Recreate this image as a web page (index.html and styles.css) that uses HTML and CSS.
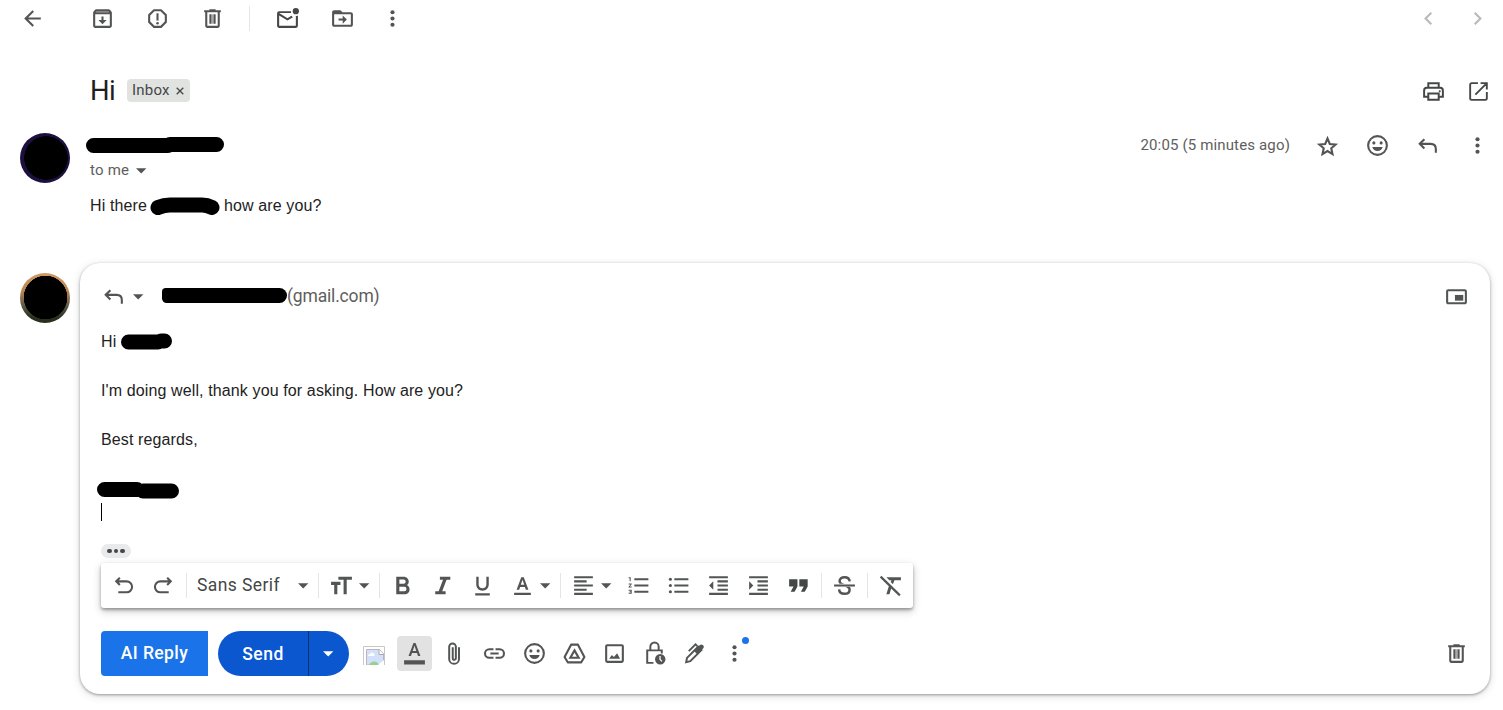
FILE: index.html
```html
<!DOCTYPE html>
<html lang="en">
<head>
<meta charset="utf-8">
<title>Hi</title>
<link rel="stylesheet" href="styles.css">
</head>
<body>
<svg class="defs" aria-hidden="true">
  <symbol id="back" viewBox="0 0 24 24"><path d="M20 11H7.830l5.590-5.590L12 4l-8 8 8 8 1.410-1.410L7.830 13H20v-2z"/></symbol>
  <symbol id="archive" viewBox="0 0 24 24"><path d="M20.540 5.230l-1.390-1.680C18.880 3.210 18.470 3 18 3H6c-.470 0-.880.210-1.160.550L3.460 5.230C3.170 5.570 3 6.020 3 6.500V19c0 1.100.900 2 2 2h14c1.100 0 2-.900 2-2V6.500c0-.480-.170-.930-.460-1.270zM19 19H5V8h14v11z"/><path d="M5.500 6.200h13l-.800-1.200H6.300z" fill="#999"/><path d="M11 10h2v3.500h3L12 17.500l-4-4h3z"/></symbol>
  <symbol id="spam" viewBox="0 0 24 24"><path d="M15.730 3H8.270L3 8.270v7.460L8.270 21h7.460L21 15.730V8.270L15.730 3zM19 14.900L14.900 19H9.100L5 14.900V9.100L9.100 5h5.800L19 9.100v5.800z"/><path d="M11 7h2v7h-2z"/><circle cx="12" cy="16.500" r="1.200"/></symbol>
  <symbol id="trash" viewBox="0 0 24 24"><path d="M15 4V3H9v1H4v2h1v13c0 1.100.900 2 2 2h10c1.100 0 2-.900 2-2V6h1V4h-5zm2 15H7V6h10v13zM9 8h2v9H9zm4 0h2v9h-2z"/><path d="M11 8h2v9h-2z" opacity=".5"/></symbol>
  <symbol id="unread" viewBox="0 0 24 24"><path d="M15.500 5H4a2 2 0 0 0-2 2v12c0 1.100.900 2 2 2h16a2 2 0 0 0 2-2V9.200c-.600.300-1.300.500-2 .500V19H4V9l8 5 5.200-3.300-1.500-1.400L12 11.700 4 6.800h11.300z"/><circle cx="20" cy="5" r="3"/></symbol>
  <symbol id="move" viewBox="0 0 24 24"><path d="M20 6h-8l-2-2H4c-1.100 0-2 .900-2 2v12c0 1.100.900 2 2 2h16c1.100 0 2-.900 2-2V8c0-1.100-.900-2-2-2zm0 12H4V8h16v10z"/><path d="M12.200 9l4 4-4 4v-3H8.200v-2h4z"/></symbol>
  <symbol id="more" viewBox="0 0 24 24"><circle cx="12" cy="6" r="2"/><circle cx="12" cy="12" r="2"/><circle cx="12" cy="18" r="2"/></symbol>
  <symbol id="prev" viewBox="0 0 24 24"><path d="M14.700 6.500L9.200 12l5.500 5.500" fill="none" stroke="currentColor" stroke-width="2"/></symbol>
  <symbol id="next" viewBox="0 0 24 24"><path d="M9.300 6.500l5.500 5.500-5.500 5.500" fill="none" stroke="currentColor" stroke-width="2"/></symbol>
  <symbol id="print" viewBox="0 0 24 24"><path d="M7 8V4h10v4M7 17H3v-6c0-1.700 1-2.500 2.500-2.500h13c1.500 0 2.500.800 2.500 2.500v6h-4M7 14h10v6H7z" fill="none" stroke="currentColor" stroke-width="1.900"/><circle cx="18" cy="11.700" r="1"/></symbol>
  <symbol id="open" viewBox="0 0 24 24"><path d="M11.500 4H5.500C4.500 4 4 4.500 4 5.500v13c0 1 .500 1.500 1.500 1.500h13c1 0 1.500-.500 1.500-1.500v-6M14 4h6v6M20 4L9 15" fill="none" stroke="currentColor" stroke-width="1.800"/></symbol>
  <symbol id="star" viewBox="0 0 24 24"><path d="M12 4.500l2.200 5.200 5.600.500-4.200 3.700 1.200 5.500-4.800-2.900-4.800 2.900 1.200-5.500-4.200-3.700 5.600-.500z" fill="none" stroke="currentColor" stroke-width="2" transform="translate(0 .8)"/></symbol>
  <symbol id="smile" viewBox="0 0 24 24"><circle cx="12" cy="12" r="9" fill="none" stroke="currentColor" stroke-width="2"/><circle cx="8.500" cy="9.500" r="1.500"/><circle cx="15.500" cy="9.500" r="1.500"/><path d="M7 13.500h10c-.700 2.300-2.600 3.800-5 3.800s-4.300-1.500-5-3.800z"/></symbol>
  <symbol id="reply" viewBox="0 0 24 24"><path d="M9 5.500L4.500 10 9 14.500M4.500 10H15c3 0 5 2 5 5v3.500" fill="none" stroke="currentColor" stroke-width="2" transform="translate(0 .4)"/></symbol>
  <symbol id="popout" viewBox="0 0 24 24"><path d="M20 5H4c-1.100 0-2 .900-2 2v10.500c0 1.100.900 2 2 2h16c1.100 0 2-.900 2-2V7c0-1.100-.900-2-2-2zm0 12.600H4V7h16z"/><path d="M10.500 10.500h8v5.500h-8z"/></symbol>
  <symbol id="undo" viewBox="0 0 24 24"><path d="M8.500 4.500L5 8l3.500 3.500M5 8h10a4.500 4.500 0 0 1 0 10.500H7" fill="none" stroke="currentColor" stroke-width="2"/></symbol>
  <symbol id="redo" viewBox="0 0 24 24"><path d="M15.500 4.500L19 8l-3.500 3.500M19 8H9a4.500 4.500 0 0 0 0 10.500h8" fill="none" stroke="currentColor" stroke-width="2"/></symbol>
  <symbol id="size" viewBox="0 0 24 24"><path d="M9 3.500v3h5v14h3v-14h5v-3zM2 11.500h3v9h3v-9h3v-3H2z"/></symbol>
  <symbol id="bold" viewBox="0 0 24 24"><path d="M16.200 11.600c1.100-.800 1.800-2 1.800-3.300C18 5.600 15.900 3.500 13.200 3.500H6v17h8c2.700 0 4.800-2 4.800-4.700 0-1.900-1-3.500-2.600-4.200zM9 6.300h4a2 2 0 0 1 0 4.100H9zm4.600 11.300H9v-4.500h4.600a2.200 2.200 0 0 1 0 4.500z"/></symbol>
  <symbol id="italic" viewBox="0 0 24 24"><path d="M9.500 3.500v3h3l-4.200 11H5v3h10v-3h-3.300l4.200-11H19.500v-3z"/></symbol>
  <symbol id="underline" viewBox="0 0 24 24"><path d="M12 17c3.310 0 6-2.690 6-6V3.500h-2.300V11c0 2-1.500 3.700-3.700 3.700S8.300 13 8.300 11V3.500H6V11c0 3.310 2.690 6 6 6zM5 19.500h14v2.200H5z"/></symbol>
  <symbol id="color" viewBox="0 0 24 24"><path d="M4 19h16v2.200H4zM10.800 4L6.300 16h2.500l.900-2.600h4.600l.900 2.600h2.500L13.200 4zm-.450 7.300L12 6.400l1.650 4.900z"/></symbol>
  <symbol id="align" viewBox="0 0 24 24"><path d="M3 3h18v2H3zM3 7h12v2H3zM3 11h18v2H3zM3 15h12v2H3zM3 19h18v2H3z"/></symbol>
  <symbol id="ol" viewBox="0 0 24 24"><path d="M2.500 17h2v.500h-1v1h1v.500h-2v1h3v-4h-3zm1-9h1V4h-2v1h1zm-1 3h1.800l-1.800 2.100v.900h3v-1H3.700l1.800-2.100V10h-3zM8 5h13.500v2H8zm0 12h13.500v2H8zm0-6h13.500v2H8z"/></symbol>
  <symbol id="ul" viewBox="0 0 24 24"><circle cx="4.200" cy="6" r="1.500"/><circle cx="4.200" cy="12" r="1.500"/><circle cx="4.200" cy="18" r="1.500"/><path d="M8 5h13.500v2H8zm0 12h13.500v2H8zm0-6h13.500v2H8z"/></symbol>
  <symbol id="outdent" viewBox="0 0 24 24"><path d="M11 17h10v-2H11zm-8-5l4 4V8zm0 9h18v-2H3zM3 3v2h18V3zm8 6h10V7H11zm0 4h10v-2H11z"/></symbol>
  <symbol id="indent" viewBox="0 0 24 24"><path d="M3 21h18v-2H3zM3 8v8l4-4zm8 9h10v-2H11zM3 3v2h18V3zm8 6h10V7H11zm0 4h10v-2H11z"/></symbol>
  <symbol id="quote" viewBox="0 0 24 24"><path d="M4.500 18h3.700l2.800-5V6H3v7h4.200zm9.800 0H18l2.800-5V6h-8v7H17z"/></symbol>
  <symbol id="strike" viewBox="0 0 24 24"><path d="M17 8c-.300-2.600-2.200-4-5-4-2.700 0-4.700 1.400-4.700 3.600 0 2.300 2 3.300 4.900 4.100 3 .900 4.700 1.900 4.700 4.300 0 2.500-2.100 4-4.900 4-3 0-5-1.500-5.200-4.300" fill="none" stroke="currentColor" stroke-width="2.400"/><path d="M1 10.300h22v3H1z" fill="#fff"/><path d="M2 11h20v2H2z"/></symbol>
  <symbol id="clear" viewBox="0 0 24 24"><path d="M8 4h14v3h-6.200l-1.500 3.700-2.100-2.100.700-1.600h-2zM12.900 14L11 20.500H8l2.700-8.700z"/><path d="M2.500 3.500l18.500 18" stroke="currentColor" stroke-width="2.100"/></symbol>
  <symbol id="format" viewBox="0 0 24 24"><path d="M2 18.500h20v4H2zM11 2L6.300 14.500h2.300l1-2.900h4.800l1 2.900h2.300L13 2zm-.700 7.600L12 4.600l1.700 5z"/></symbol>
  <symbol id="clip" viewBox="0 0 24 24"><path d="M16.300 6v11.200a4.700 4.700 0 0 1-9.400 0V5.500a3.200 3.200 0 0 1 6.400 0v11a1.500 1.500 0 0 1-3 0V6" fill="none" stroke="currentColor" stroke-width="1.900"/></symbol>
  <symbol id="link" viewBox="0 0 24 24"><path d="M11 7.900H7a4.100 4.100 0 0 0 0 8.200h4M13 7.900h4a4.100 4.100 0 0 1 0 8.200h-4M8 12h8" fill="none" stroke="currentColor" stroke-width="2"/></symbol>
  <symbol id="drive" viewBox="0 0 24 24"><path d="M8.700 3.500h6.600l6.200 11.800-3 5.200h-13l-3-5.200z" fill="none" stroke="currentColor" stroke-width="2" stroke-linejoin="round"/><path d="M12 9l4 7H8z" fill="none" stroke="currentColor" stroke-width="2"/></symbol>
  <symbol id="image" viewBox="0 0 24 24"><rect x="4" y="4" width="16" height="16" rx="1" fill="none" stroke="currentColor" stroke-width="2"/><path d="M6.800 17l2.700-3.600 2 2 3-3.600 2.800 5.200z"/></symbol>
  <symbol id="lock" viewBox="0 0 24 24"><path d="M11 21H5V9h14v3M8 9V5.500a4 4 0 0 1 8 0V9" fill="none" stroke="currentColor" stroke-width="1.900"/><circle cx="17.500" cy="17.500" r="5"/><path d="M17.300 14.500v3.200l1.900 1.900" fill="none" stroke="#fff" stroke-width="1.200"/></symbol>
  <symbol id="pen" viewBox="0 0 24 24"><path d="M4 20.300l.8-4.100L15.500 5.500l3.200 3.200L8 19.400z" fill="none" stroke="currentColor" stroke-width="1.900"/><path d="M11.500 9.500L17 4c1-1 2.200-1 3.200 0s1 2.200 0 3.200L14.700 12.700z"/><path d="M6.500 9.700L13 3.300l1.700 1.700" fill="none" stroke="currentColor" stroke-width="1.800"/></symbol>
  <symbol id="caret" viewBox="0 0 20 25"><path d="M5 10.300h10.400l-5.200 5.200z"/></symbol>
</svg>

<nav class="toolbar">
  <svg class="icon first"><use href="#back"/></svg>
  <svg class="icon"><use href="#archive"/></svg>
  <svg class="icon"><use href="#spam"/></svg>
  <svg class="icon"><use href="#trash"/></svg>
  <span class="rule"></span>
  <svg class="icon dark"><use href="#unread"/></svg>
  <svg class="icon"><use href="#move"/></svg>
  <svg class="icon kebab"><use href="#more"/></svg>
  <div class="pager"><svg class="icon"><use href="#prev"/></svg><svg class="icon"><use href="#next"/></svg></div>
</nav>

<header class="subject">
  <h1>Hi</h1>
  <span class="label"><span>Inbox</span><svg class="close" viewBox="0 0 8 8"><path d="M.7.700l6.600 6.600M7.300.700L.7 7.300"/></svg></span>
  <div class="subject-actions"><svg class="icon dark"><use href="#print"/></svg><svg class="icon dark"><use href="#open"/></svg></div>
</header>

<article class="message">
  <div class="avatar violet"></div>
  <div class="content">
    <div class="sender-row">
      <svg class="sender" viewBox="0 0 140 18"><path d="M8.500 9.500H83M85 8.500h46.500" class="marker"/></svg>
      <div class="meta">
        <time>20:05 (5 minutes ago)</time>
        <svg class="icon"><use href="#star"/></svg>
        <svg class="icon"><use href="#smile"/></svg>
        <svg class="icon"><use href="#reply"/></svg>
        <svg class="icon"><use href="#more"/></svg>
      </div>
    </div>
    <div class="recipient"><span>to me</span><svg class="caret"><use href="#caret"/></svg></div>
    <p class="body-text"><span>Hi there</span><svg class="name" viewBox="0 0 70 18"><path d="M8 10.500Q14 8 20 8H52Q57 8 62 10.500" class="marker"/></svg><span>how are you?</span></p>
  </div>
</article>

<section class="reply">
  <div class="avatar amber"></div>
  <div class="card">
    <div class="to-row">
      <svg class="icon"><use href="#reply"/></svg>
      <svg class="caret"><use href="#caret"/></svg>
      <span class="address-mask"></span>
      <span class="address">(gmail.com)</span>
      <svg class="icon popout"><use href="#popout"/></svg>
    </div>
    <div class="editor">
      <p><span>Hi</span><svg class="short" viewBox="0 0 52 18"><path d="M7.500 9H37M40 8h3.500" class="marker"/></svg></p>
      <p></p>
      <p>I'm doing well, thank you for asking. How are you?</p>
      <p></p>
      <p>Best regards,</p>
      <p></p>
      <p><svg class="signature" viewBox="0 0 82 18"><path d="M7.500 7.500H40M46 9h28.500" class="marker"/></svg></p>
      <p><span class="cursor"></span></p>
    </div>
    <div class="trimmed"><i></i><i></i><i></i></div>
    <div class="format-bar">
      <span class="cell"><svg class="icon"><use href="#undo"/></svg></span>
      <span class="cell"><svg class="icon"><use href="#redo"/></svg></span>
      <span class="sep"></span>
      <span class="font"><span>Sans Serif</span><svg class="caret"><use href="#caret"/></svg></span>
      <span class="sep"></span>
      <span class="cell wide"><svg class="icon"><use href="#size"/></svg><svg class="caret"><use href="#caret"/></svg></span>
      <span class="sep"></span>
      <span class="cell"><svg class="icon"><use href="#bold"/></svg></span>
      <span class="cell"><svg class="icon"><use href="#italic"/></svg></span>
      <span class="cell"><svg class="icon"><use href="#underline"/></svg></span>
      <span class="cell wide"><svg class="icon"><use href="#color"/></svg><svg class="caret"><use href="#caret"/></svg></span>
      <span class="sep"></span>
      <span class="cell wide"><svg class="icon"><use href="#align"/></svg><svg class="caret"><use href="#caret"/></svg></span>
      <span class="cell"><svg class="icon"><use href="#ol"/></svg></span>
      <span class="cell"><svg class="icon"><use href="#ul"/></svg></span>
      <span class="cell"><svg class="icon"><use href="#outdent"/></svg></span>
      <span class="cell"><svg class="icon"><use href="#indent"/></svg></span>
      <span class="cell"><svg class="icon dark"><use href="#quote"/></svg></span>
      <span class="sep"></span>
      <span class="cell"><svg class="icon"><use href="#strike"/></svg></span>
      <span class="sep"></span>
      <span class="cell"><svg class="icon"><use href="#clear"/></svg></span>
    </div>
    <div class="send-row">
      <button class="ai">AI Reply</button>
      <div class="send"><span class="send-text">Send</span><span class="send-more"><svg class="caret"><use href="#caret"/></svg></span></div>
      <svg class="missing" viewBox="0 0 22 19"><path d="M.5 19V.5h21V19" fill="none" stroke="#c8c8c8"/><path d="M3.500 19V3.500h13l4 4V19z" fill="#d2e0fb" stroke="#b8b8b8"/><path d="M16 3.500v5h5" fill="#fff" stroke="#aaa"/><path d="M5 10a2 2 0 0 1 2-2 2.500 2.500 0 0 1 4.500 2z" fill="#fff"/><path d="M6 19c2-4.500 8-5 10 0z" fill="#9bd08c"/><path d="M15 19l6-5v5z" fill="#fff"/></svg>
      <span class="cell active"><svg class="icon"><use href="#format"/></svg></span>
      <span class="cell"><svg class="icon"><use href="#clip"/></svg></span>
      <span class="cell"><svg class="icon"><use href="#link"/></svg></span>
      <span class="cell"><svg class="icon"><use href="#smile"/></svg></span>
      <span class="cell"><svg class="icon"><use href="#drive"/></svg></span>
      <span class="cell"><svg class="icon"><use href="#image"/></svg></span>
      <span class="cell"><svg class="icon"><use href="#lock"/></svg></span>
      <span class="cell"><svg class="icon"><use href="#pen"/></svg></span>
      <span class="cell options"><svg class="icon"><use href="#more"/></svg><span class="dot"></span></span>
      <svg class="icon discard"><use href="#trash"/></svg>
    </div>
  </div>
</section>
</body>
</html>
```
FILE: styles.css
```css
* { box-sizing: border-box; }
body { margin: 0; height: 710px; overflow: hidden; background: #fff; color: #222; font-family: Roboto, "Liberation Sans", sans-serif; }
h1, p { margin: 0; font-weight: 400; }
svg { display: block; flex: none; }
.defs { position: absolute; width: 0; height: 0; }
.icon { width: 25px; height: 25px; color: #535554; fill: currentColor; }
.dark { color: #444746; }
.caret { width: 20px; height: 25px; fill: #535554; }
.marker { fill: none; stroke: #000; stroke-width: 15px; stroke-linecap: round; stroke-linejoin: round; }

.toolbar { display: flex; align-items: center; gap: 30px; height: 37px; padding: 0 26px 0 20px; }
.toolbar .first { margin-right: 15px; }
.rule { width: 1px; height: 25px; margin: 0 -5px 0 -6px; background: #e6e6e6; }
.kebab { margin-left: -5px; margin-right: auto; }
.pager { display: flex; gap: 24px; margin-right: -13px; }
.pager .icon { color: #b8b9b9; }

.subject { display: flex; align-items: center; height: 53px; margin-top: 27px; padding: 0 12px 0 90px; color: #1f1f1f; }
.subject h1 { width: 37px; font-size: 27.500px; letter-spacing: -.6px; line-height: 34px; }
.label { display: flex; align-items: center; justify-content: space-between; width: 63px; height: 23px; padding: 0 6px 0 5px; border-radius: 4px; background: #e1e3e1; color: #444746; font-size: 15px; letter-spacing: .2px; }
.label > span { padding-bottom: 2px; }
.close { width: 8px; height: 8px; margin-top: 1px; fill: none; stroke: #444746; stroke-width: 1.300px; }
.subject-actions { display: flex; gap: 20px; margin-left: auto; padding-top: 2px; }

.message { display: flex; height: 146px; padding: 16px 13px 0 20px; }
.avatar { flex: none; width: 50px; height: 50px; border-radius: 50%; }
.violet { background: radial-gradient(circle at 26px 25px, #000 21.500px, #1d1040 22px); }
.amber { background: radial-gradient(circle at 25.500px 24.500px, #000 21.500px, transparent 22px), linear-gradient(#d09a62 0, #b7824e 38%, #6c6350 60%, #26301d 90%); }
.content { flex: 1; padding-left: 20px; }
.sender-row { display: flex; justify-content: space-between; align-items: center; height: 25px; }
.sender { width: 140px; height: 18px; margin: -1px 0 0 -5px; }
.meta { display: flex; align-items: center; gap: 25px; }
.meta time { padding-bottom: 2px; font-size: 15px; letter-spacing: .15px; color: #5e5e5e; }
.recipient { display: flex; align-items: center; height: 25px; color: #5e5e5e; font-size: 15px; letter-spacing: .2px; }
.recipient > span { padding-bottom: 2px; }
.recipient .caret { margin-left: 2px; }
.body-text { display: flex; align-items: center; height: 24px; margin-top: 11px; font: 16px/24px "Liberation Sans", sans-serif; letter-spacing: .12px; }
.name { width: 70px; height: 18px; margin: 0 4px 0 3px; }

.reply { display: flex; padding-left: 20px; }
.reply .avatar { margin-top: 10px; }
.card { width: 1410px; height: 431px; margin-left: 10px; padding: 21px; border-radius: 20px; background: #fff; box-shadow: 0 1px 3px rgba(0,0,0,.35), 0 2px 9px rgba(60,64,67,.18); }
.to-row { display: flex; align-items: center; height: 25px; color: #5e5e5e; font-size: 17.500px; }
.to-row .caret { margin-left: 2px; }
.address-mask { width: 125px; height: 15px; margin: 0 0 2px 14px; border-radius: 4px 8px 8px 5px; background: #000; }
.address { padding-bottom: 2px; color: #5e5e5e; letter-spacing: -.17px; }
.popout { margin-left: auto; }
.editor { height: 196px; margin-top: 21px; font: 16px/24.500px "Liberation Sans", sans-serif; letter-spacing: .12px; }
.editor p { display: flex; align-items: center; height: 24.500px; }
.short { width: 52px; height: 18px; margin-left: 5px; }
.signature { width: 82px; height: 18px; margin: 3px 0 0 -4px; }
.cursor { width: 1px; height: 18px; margin-bottom: 3px; background: #000; }
.trimmed { display: flex; align-items: center; justify-content: center; gap: 2px; width: 30px; height: 14px; margin-top: 18px; border-radius: 7px; background: #e8eaed; }
.trimmed i { width: 4.500px; height: 4.500px; border-radius: 50%; background: #444746; }
.format-bar { display: flex; align-items: center; width: 812px; height: 45px; margin-top: 5px; padding: 0 2px; border-radius: 3px; background: #fff; box-shadow: 0 2px 3px rgba(0,0,0,.3), 0 3px 9px rgba(0,0,0,.22); }
.cell { display: flex; flex: none; align-items: center; justify-content: center; width: 40px; height: 35px; }
.wide { width: 55px; padding: 0 2px 0 8px; }
.sep { flex: none; width: 1px; height: 25px; margin: 0 2px 0 3px; background: #e4e5e5; }
.font { display: flex; flex: none; align-items: center; justify-content: space-between; width: 126px; padding: 0 2px 0 8px; color: #444746; font-size: 17.500px; letter-spacing: .4px; }
.font > span { padding-bottom: 2px; }
.send-row { display: flex; align-items: center; height: 45px; margin-top: 23px; }
.ai { width: 107px; height: 45px; padding: 0 0 2px; border: 0; border-radius: 4px 0 0 4px; background: #1a73e8; color: #fff; font: 500 17.500px Roboto, sans-serif; letter-spacing: .4px; }
.send { display: flex; width: 131px; height: 45px; margin-left: 10px; overflow: hidden; border-radius: 23px; background: #0b57d0; color: #fff; font-weight: 500; font-size: 17.500px; letter-spacing: .5px; }
.send-text { display: flex; align-items: center; justify-content: center; width: 91px; border-right: 1px solid #082f70; }
.send-more { display: flex; align-items: center; padding-left: 9px; }
.send-more .caret { fill: #fff; }
.missing { width: 22px; height: 19px; margin: 3px 12px 0 14px; }
.active { width: 35px; margin-right: 2px; border-radius: 4px; background: #e2e2e2; }
.options { position: relative; }
.dot { position: absolute; top: 1px; right: 5px; width: 7px; height: 7px; border-radius: 50%; background: #1a73e8; }
.discard { margin-left: auto; }
```
